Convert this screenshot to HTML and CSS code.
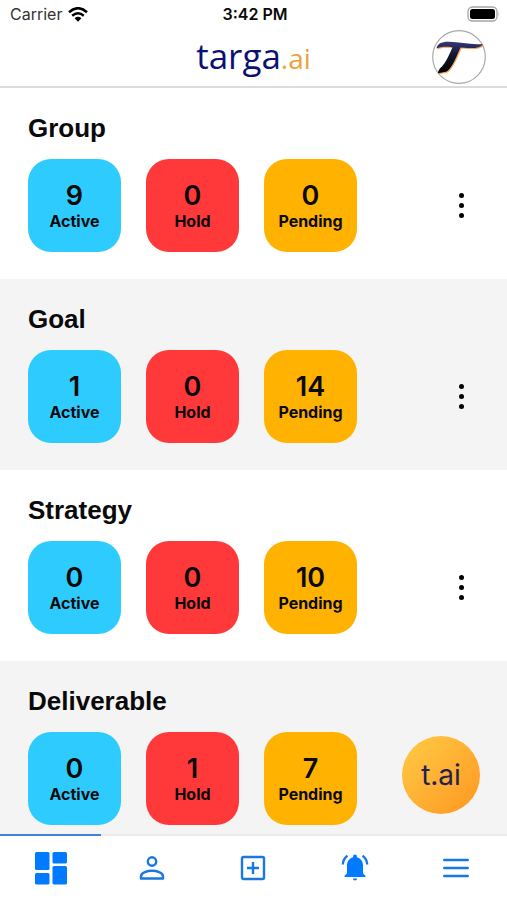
FILE: index.html
```html
<!DOCTYPE html>
<html lang="en">
<head>
<meta charset="utf-8">
<meta name="viewport" content="width=device-width, initial-scale=1">
<title>targa.ai</title>
<link rel="stylesheet" href="styles.css">
</head>
<body>
<div class="app">
  <div class="status">
    <div class="carrier">Carrier
      <svg width="20" height="15" viewBox="0 0 20 15" aria-hidden="true"><g fill="none" stroke="#000" stroke-width="2.500"><path d="M1 5.200Q10-2.800 19 5.200"/><path d="M4.200 8.700Q10 3.700 15.800 8.700"/></g><path d="M6.600 11.200Q10 8.400 13.400 11.200L10 14.800Z"/></svg>
    </div>
    <div class="time">3:42 PM</div>
    <svg class="battery" width="33" height="17" viewBox="0 0 33 17" aria-hidden="true"><rect x="1" y="1" width="29" height="14" rx="4.500" fill="#fff" stroke="#a5a5a5" stroke-width="1.300"/><rect x="3" y="3" width="25" height="10" rx="2.500"/><path d="M31.500 6q1.500 2 0 4z" fill="#a5a5a5"/></svg>
  </div>
  <header class="header">
    <div class="logo">targa<span class="logo-ai">.ai</span></div>
    <button class="avatar" aria-label="Profile">
      <svg width="54" height="54" viewBox="0 0 54 54" aria-hidden="true"><defs><linearGradient id="ink" x1="0" y1="0" x2="0" y2="1"><stop offset="0" stop-color="#343878"/><stop offset=".4" stop-color="#15172f"/><stop offset="1" stop-color="#000"/></linearGradient><path id="mark" d="M4.500 18.500C5.500 13.500 10 11.500 17 11.800C29 12.200 38 15 51 14C49 17.500 43 18.500 36 18L28.500 17.500C25 25 21 36 16 40.500C13.500 42.800 9 42 6 43.500C6 40.500 7.500 38.500 10 36.500C14 32 17 25 20.500 17.200C14 16.500 8 16.500 4.500 18.500Z"/></defs><circle cx="27" cy="27" r="26.300" fill="#fff" stroke="#a9a9a9" stroke-width="1.200"/><use href="#mark" x="1" y="1" fill="#f2a35c"/><use href="#mark" fill="url(#ink)"/></svg>
    </button>
  </header>
  <main class="main">
    <section class="group">
      <h2>Group</h2>
      <div class="row">
        <div class="card active"><b>9</b><span>Active</span></div>
        <div class="card hold"><b>0</b><span>Hold</span></div>
        <div class="card pending"><b>0</b><span>Pending</span></div>
        <button class="more" aria-label="Group options"><i></i><i></i><i></i></button>
      </div>
    </section>
    <section class="group">
      <h2>Goal</h2>
      <div class="row">
        <div class="card active"><b>1</b><span>Active</span></div>
        <div class="card hold"><b>0</b><span>Hold</span></div>
        <div class="card pending"><b>14</b><span>Pending</span></div>
        <button class="more" aria-label="Goal options"><i></i><i></i><i></i></button>
      </div>
    </section>
    <section class="group">
      <h2>Strategy</h2>
      <div class="row">
        <div class="card active"><b>0</b><span>Active</span></div>
        <div class="card hold"><b>0</b><span>Hold</span></div>
        <div class="card pending"><b>10</b><span>Pending</span></div>
        <button class="more" aria-label="Strategy options"><i></i><i></i><i></i></button>
      </div>
    </section>
    <section class="group">
      <h2>Deliverable</h2>
      <div class="row">
        <div class="card active"><b>0</b><span>Active</span></div>
        <div class="card hold"><b>1</b><span>Hold</span></div>
        <div class="card pending"><b>7</b><span>Pending</span></div>
      </div>
    </section>
    <button class="fab">t.ai</button>
  </main>
  <nav class="tabs">
    <a class="tab current" href="#dashboard" aria-label="Dashboard"><svg width="34" height="34" viewBox="0 0 34 34" fill="#007aff"><rect x="1" y="1" width="14.500" height="18" rx="1.500"/><rect x="18.500" y="1" width="14.500" height="11.500" rx="1.500"/><rect x="1" y="22" width="14.500" height="11.500" rx="1.500"/><rect x="18.500" y="15" width="14.500" height="18.500" rx="1.500"/></svg></a>
    <a class="tab" href="#people" aria-label="People"><svg width="26" height="26" viewBox="0 0 26 26" fill="none" stroke="#1878e0" stroke-width="2.400"><circle cx="13" cy="6.500" r="4.200"/><path d="M2 23.500v-2.500C2.500 17.500 8 15.800 13 15.800S23.500 17.500 24 21v2.500z" stroke-linejoin="round"/></svg></a>
    <a class="tab" href="#add" aria-label="Add"><svg width="26" height="26" viewBox="0 0 26 26" fill="none" stroke="#1878e0" stroke-width="2.400"><rect x="2" y="2" width="22" height="22" rx="1.500"/><path d="M13 7v12M7 13h12"/></svg></a>
    <a class="tab" href="#alerts" aria-label="Alerts"><svg width="28" height="28" viewBox="0 0 28 28"><path fill="#007aff" d="M14 .500c1.200 0 1.900.8 1.900 2v.8C19.800 4.300 22 7.500 22 11.500v8l2.500 2.200v1.300h-21v-1.300L6 19.500v-8c0-4 2.200-7.200 6.100-8.200v-.8c0-1.200.7-2 1.900-2zM11.800 24.500h4.400q-.3 2-2.200 2t-2.200-2z"/><path fill="none" stroke="#1878e0" stroke-width="2.300" d="M6.500 1.800Q2 5 1.800 10.500M21.500 1.800Q26 5 26.200 10.500"/></svg></a>
    <a class="tab" href="#menu" aria-label="Menu"><svg width="26" height="20" viewBox="0 0 26 20" stroke="#1878e0" stroke-width="2.500" stroke-linecap="round"><path d="M1.300 2h23.400M1.300 10h23.400M1.300 18h23.400"/></svg></a>
  </nav>
</div>
</body>
</html>
```
FILE: styles.css
```css
* { box-sizing: border-box; }
body { margin: 0; background: #fff; color: #0a0a0a; font-family: Inter, "Liberation Sans", sans-serif; }
button { padding: 0; border: 0; background: none; font: inherit; color: inherit; }
svg { display: block; }
.app { display: flex; flex-direction: column; height: 100vh; }

.status { display: grid; grid-template-columns: 1fr auto 1fr; align-items: center; height: 28px; padding: 0 7px 0 10px; font-size: 16px; }
.carrier { display: flex; align-items: center; gap: 6px; color: #333; }
.time { font-weight: 600; }
.battery { justify-self: end; }

.header { display: grid; grid-template-columns: 1fr auto 1fr; align-items: center; height: 60px; padding: 0 21px; border-bottom: 2px solid #dcdcdc; }
.logo { grid-column: 2; font: 500 35px/48px "Open Sans", sans-serif; color: #0a1172; }
.logo-ai { font-size: 28px; font-weight: 400; color: #f0a040; }
.avatar { justify-self: end; border-radius: 50%; }

.main { position: relative; flex: 1; min-height: 0; overflow: hidden; }
.group { height: 191px; padding: 24px 28px 0; }
.group:nth-child(even) { background: #f4f4f4; }
h2 { margin: 0 0 14px; font: bold 26px/33px "Liberation Sans", sans-serif; }
.row { display: flex; align-items: center; gap: 25px; }
.card { display: flex; flex-direction: column; align-items: center; justify-content: center; width: 93px; height: 93px; border-radius: 23px; }
.card b { font-size: 27px; line-height: 30px; font-weight: 600; }
.card span { font-size: 16px; line-height: 20px; font-weight: 700; }
.active { background: #2ecbff; }
.hold { background: #ff3939; }
.pending { background: #ffb300; }
.more { display: flex; flex-direction: column; align-items: center; gap: 5px; margin-left: auto; padding: 10px 15px; }
.more i { width: 5px; height: 5px; border-radius: 50%; background: #000; }
.fab { position: absolute; right: 27px; bottom: 20px; width: 78px; height: 78px; border-radius: 50%; background: linear-gradient(135deg, #ffcc45, #ff9620); color: #24204f; font: 28px/78px Inter, sans-serif; }

.tabs { display: grid; grid-template-columns: repeat(5, 1fr); height: 66px; border-top: 2px solid #ebebeb; }
.tab { display: grid; place-items: center; margin-top: -2px; border-top: 2px solid transparent; }
.current { border-top-color: #3c86d8; }
```
